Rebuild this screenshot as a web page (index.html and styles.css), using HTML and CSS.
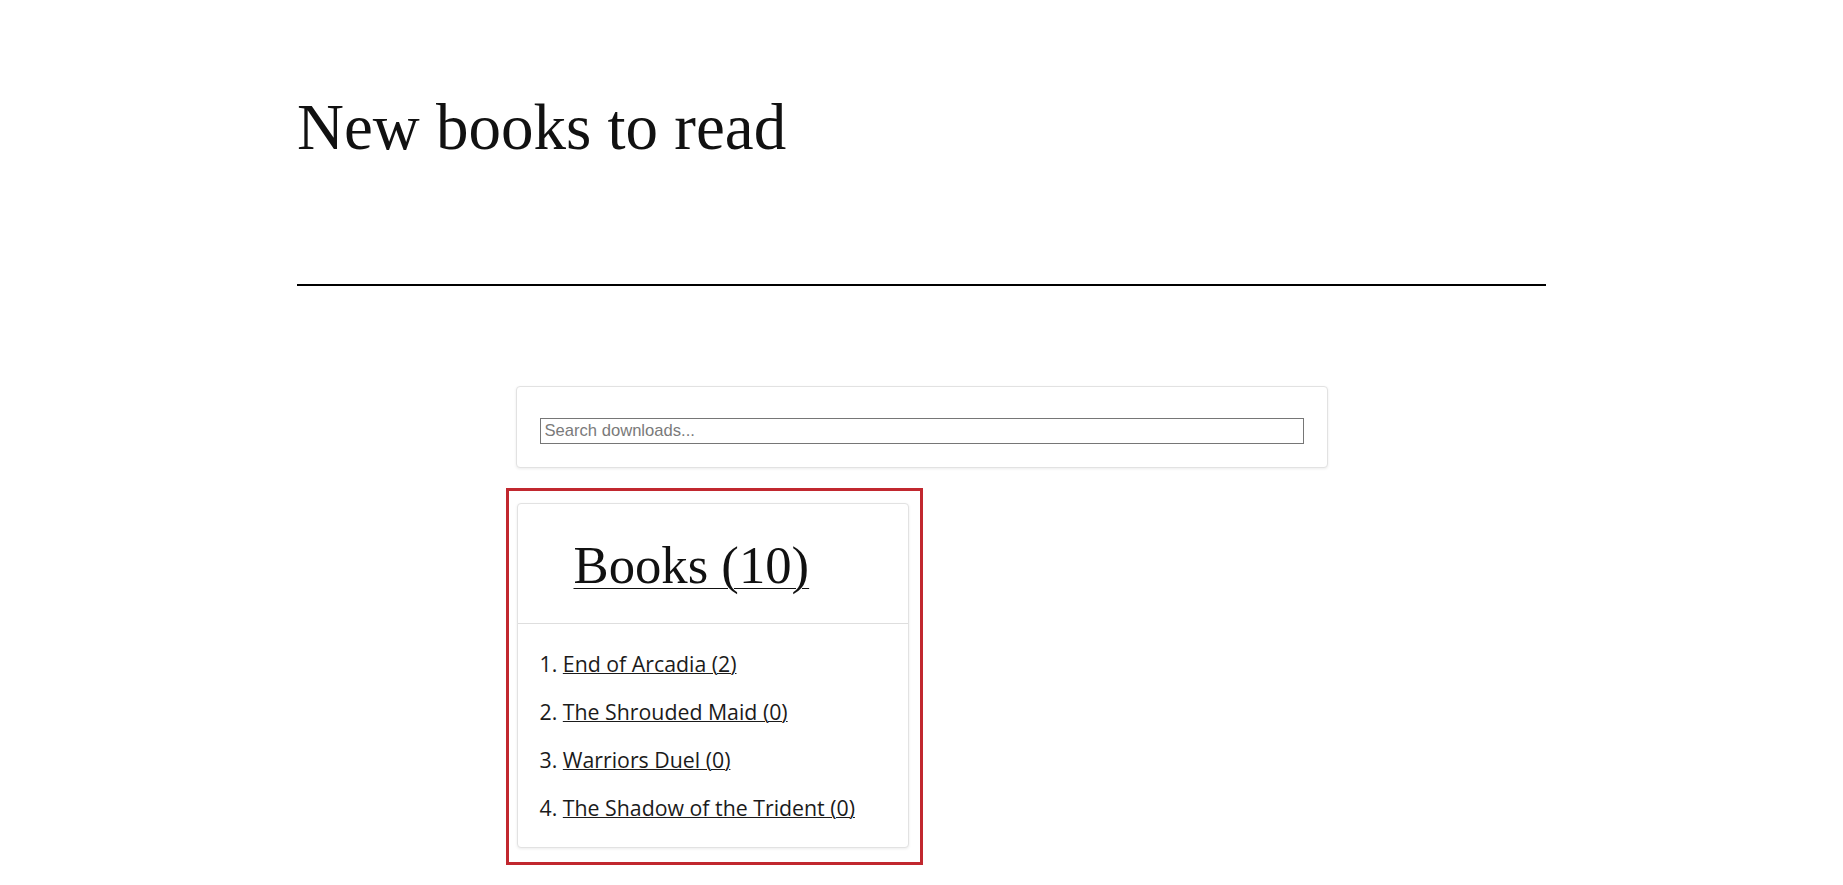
FILE: index.html
```html
<!DOCTYPE html>
<html lang="en">
<head>
<meta charset="utf-8">
<title>New books to read</title>
<link rel="stylesheet" href="styles.css">
</head>
<body>
<div class="page">
  <h1 class="title">New books to read</h1>
  <div class="rule"></div>
  <div class="column">
    <div class="search-card">
      <input class="search-input" type="text" placeholder="Search downloads...">
    </div>
    <div class="highlight">
      <div class="book-card">
        <div class="book-card-header">
          <h2 class="book-card-title"><a href="#">Books (10)</a></h2>
        </div>
        <ol class="book-list">
          <li><a href="#">End of Arcadia (2)</a></li>
          <li><a href="#">The Shrouded Maid (0)</a></li>
          <li><a href="#">Warriors Duel (0)</a></li>
          <li><a href="#">The Shadow of the Trident (0)</a></li>
        </ol>
      </div>
    </div>
  </div>
</div>
</body>
</html>
```
FILE: styles.css
```css
html, body {
  margin: 0;
  padding: 0;
  background: #ffffff;
}

body {
  font-family: "Open Sans", "Noto Sans", sans-serif;
  color: #1b1b1b;
}

.page {
  max-width: 1249px;
  margin: 0 auto;
  padding-top: 90px;
}

.title {
  margin: 0;
  font-family: "Liberation Serif", serif;
  font-weight: 400;
  font-size: 65px;
  line-height: 75px;
  color: #111111;
}

.rule {
  height: 2px;
  background: #000000;
  margin-top: 119px;
}

.column {
  width: 812px;
  margin: 100px auto 0;
}

.search-card {
  border: 1px solid #e2e2e2;
  border-radius: 4px;
  box-shadow: 0 1px 3px rgba(0, 0, 0, 0.08);
  padding: 31px 23px 23px;
  background: #fff;
}

.search-input {
  display: block;
  width: 100%;
  box-sizing: border-box;
  height: 26px;
  margin: 0;
  border: 1px solid #767676;
  border-radius: 0;
  padding: 0 4px;
  font-family: "Liberation Sans", Arial, sans-serif;
  font-size: 16.6px;
  color: #111;
  background: #fff;
}

.search-input::placeholder {
  color: #7a7a7a;
}

.highlight {
  width: fit-content;
  margin-top: 20px;
  margin-left: -10px;
  border: 3px solid #c1282f;
  padding: 12px 11px 14px 8px;
}

.book-card {
  width: 392px;
  box-sizing: border-box;
  border: 1px solid #e2e2e2;
  border-radius: 4px;
  box-shadow: 0 1px 3px rgba(0, 0, 0, 0.08);
  background: #fff;
}

.book-card-header {
  padding: 29px 24px 25px 56px;
  border-bottom: 1px solid #dedede;
}

.book-card-title {
  margin: 0;
  font-family: "Liberation Serif", serif;
  font-weight: 400;
  font-size: 52.7px;
  line-height: 65px;
}

.book-card-title a {
  color: #111111;
  text-decoration: underline;
  text-decoration-thickness: 1px;
  text-underline-offset: 5px;
}

.book-list {
  margin: 0;
  padding: 24px 24px 23px 22px;
  list-style-position: inside;
  font-size: 21.3px;
  line-height: 32px;
}

.book-list li {
  margin-bottom: 16px;
}

.book-list li:last-child {
  margin-bottom: 0;
}

.book-list a {
  color: #1b1b1b;
  text-decoration: underline;
  text-decoration-thickness: 1px;
}
```
